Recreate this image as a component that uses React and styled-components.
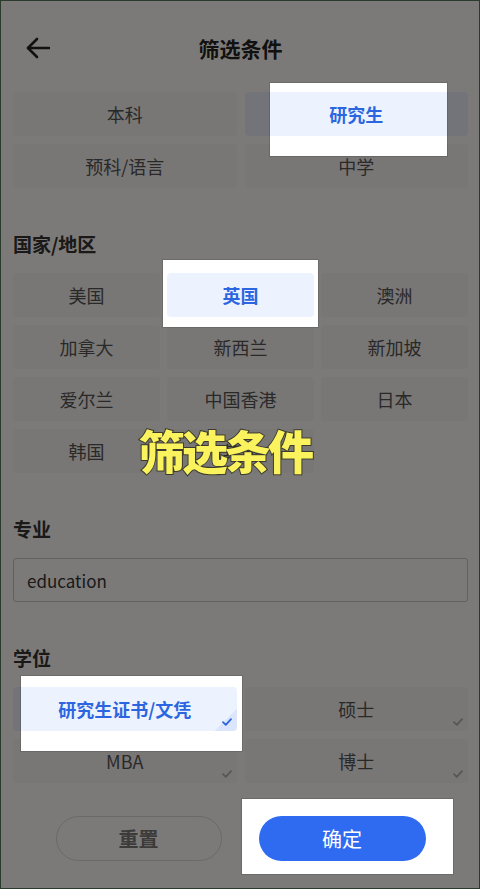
import React from 'react';
import styled, { createGlobalStyle } from 'styled-components';

const GlobalStyle = createGlobalStyle`
    html, body {
        margin: 0;
        padding: 0;
        background: #fff;
    }
    body {
        font-family: "Noto Sans CJK SC", "Noto Sans", sans-serif;
        color: #333;
    }
    * {
        box-sizing: border-box;
    }
`

const Page = styled.div`
    position: relative;
    width: 480px;
    min-height: 889px;
    padding: 0 12px 0 13px;
    background: #fff;
`

const Header = styled.header`
    display: grid;
    grid-template-columns: 48px 1fr 48px;
    align-items: center;
    height: 40px;
    margin-top: 28px;
    margin-bottom: 24px;
`

const BackButton = styled.div`
    display: flex;
    align-items: center;
    padding-left: 13px;
    color: #222;
`

const Title = styled.h1`
    margin: 0;
    text-align: center;
    font-size: 21px;
    font-weight: 700;
    color: #222;
`

const SectionTitle = styled.h3`
    margin: 43px 0 16px;
    font-size: 19px;
    line-height: 26px;
    font-weight: 600;
    color: #333;
`

const OptionGrid = styled.div`
    display: grid;
    grid-template-columns: repeat(${props => props.$cols || 2}, 1fr);
    column-gap: ${props => (props.$cols === 3 ? 7 : 8)}px;
    row-gap: 8px;
`

const Cell = styled.div`
    position: relative;
    height: 44px;
`

const Tile = styled.div`
    position: relative;
    height: 100%;
    display: flex;
    align-items: center;
    justify-content: center;
    border-radius: 4px;
    overflow: hidden;
    font-size: 18px;
    background: ${props => (props.$on ? '#edf3fe' : '#f8f8f9')};
    color: ${props => (props.$on ? '#2b66e0' : '#555')};
    font-weight: ${props => (props.$on ? 600 : 400)};
`

const Corner = styled.span`
    position: absolute;
    right: 0;
    bottom: 0;
    width: 24px;
    height: 22px;
    display: flex;
    align-items: flex-end;
    justify-content: flex-end;
    padding: 0 5px 5px 0;
    background: ${props => (props.$on ? 'linear-gradient(135deg, transparent 50%, #dbe5fb 50%)' : 'transparent')};
    color: ${props => (props.$on ? '#2b66e0' : '#b4b4b4')};
`

const TextField = styled.input`
    display: block;
    width: 100%;
    height: 44px;
    padding: 0 13px;
    border: 1px solid #cacaca;
    border-radius: 3px;
    font-family: inherit;
    font-size: 17px;
    color: #333;
    background: #fff;
    outline: none;
`

const Actions = styled.div`
    display: flex;
    justify-content: center;
    gap: 37px;
    margin-top: 33px;
`

const ActionSlot = styled.div`
    position: relative;
`

const PillButton = styled.button`
    width: ${props => props.$w || 166}px;
    height: 45px;
    border-radius: 23px;
    font-family: inherit;
    font-size: 20px;
    border: ${props => (props.$primary ? 'none' : '1px solid #dcdcdc')};
    background: ${props => (props.$primary ? '#2f6bf0' : '#fff')};
    color: ${props => (props.$primary ? '#fff' : '#7a7a7a')};
    font-weight: ${props => (props.$primary ? 400 : 600)};
`

// guide layer: dims the page, spotlights sit above it
const Dimmer = styled.div`
    position: fixed;
    inset: 0;
    z-index: 10;
    pointer-events: none;
    background: rgba(4, 2, 0, 0.525);
    border: 1px solid #2a3b2d;
`

const Spot = styled.div`
    position: absolute;
    z-index: 20;
    top: ${props => props.$t}px;
    right: ${props => props.$r}px;
    bottom: ${props => props.$b}px;
    left: ${props => props.$l}px;
    background: #fff;
    overflow: hidden;
    box-shadow: 0 0 0 1px rgba(0, 0, 0, 0.12);
`

const Lit = styled.div`
    position: absolute;
    top: ${props => -props.$t}px;
    right: ${props => -props.$r}px;
    bottom: ${props => -props.$b}px;
    left: ${props => -props.$l}px;
`

const Caption = styled.div`
    position: absolute;
    z-index: 30;
    left: 139px;
    top: 398px;
    font-size: 46px;
    line-height: 46px;
    letter-spacing: -3px;
    font-weight: 900;
    color: #fbf35e;
    -webkit-text-stroke: 2px #3b3a2c;
    paint-order: stroke fill;
    white-space: nowrap;
`

function ArrowLeft() {
    return (
        <svg width="24" height="22" viewBox="0 0 24 22" fill="none" stroke="currentColor" strokeWidth="2.6" strokeLinecap="round" strokeLinejoin="round">
            <path d="M23 11H2" />
            <path d="M11 2L2 11l9 9" />
        </svg>
    );
}

function Check() {
    return (
        <svg width="10" height="8" viewBox="0 0 10 8" fill="none" stroke="currentColor" strokeWidth="1.8" strokeLinecap="round" strokeLinejoin="round">
            <path d="M1 4.2l2.8 2.6L9 1.2" />
        </svg>
    );
}

function Highlight({ spot, children }) {
    const [t, r, b, l] = spot;
    return (
        <Spot $t={t} $r={r} $b={b} $l={l}>
            <Lit $t={t} $r={r} $b={b} $l={l}>{children}</Lit>
        </Spot>
    );
}

function Option({ label, on, check, spot }) {
    const tile = (
        <Tile $on={on}>
            {label}
            {check && <Corner $on={on}><Check /></Corner>}
        </Tile>
    );
    return (
        <Cell>
            {tile}
            {spot && <Highlight spot={spot}>{tile}</Highlight>}
        </Cell>
    );
}

const levels = [
    { label: '本科' },
    { label: '研究生', on: true, spot: [-9, 21, -20, 25] },
    { label: '预科/语言' },
    { label: '中学' },
];

const regions = [
    { label: '美国' },
    { label: '英国', on: true, spot: [-13, -4, -10, -4] },
    { label: '澳洲' },
    { label: '加拿大' },
    { label: '新西兰' },
    { label: '新加坡' },
    { label: '爱尔兰' },
    { label: '中国香港' },
    { label: '日本' },
    { label: '韩国' },
    { label: '其他' },
];

const degrees = [
    { label: '研究生证书/文凭', on: true, spot: [-11, -5, -20, 8] },
    { label: '硕士' },
    { label: 'MBA' },
    { label: '博士' },
];

export default function App() {
    return (
        <Page>
            <GlobalStyle />
            <Header>
                <BackButton><ArrowLeft /></BackButton>
                <Title>筛选条件</Title>
                <span />
            </Header>

            <OptionGrid $cols={2}>
                {levels.map(item => <Option key={item.label} {...item} />)}
            </OptionGrid>

            <SectionTitle>国家/地区</SectionTitle>
            <OptionGrid $cols={3}>
                {regions.map(item => <Option key={item.label} {...item} />)}
            </OptionGrid>

            <SectionTitle>专业</SectionTitle>
            <TextField defaultValue="education" readOnly />

            <SectionTitle>学位</SectionTitle>
            <OptionGrid $cols={2}>
                {degrees.map(item => <Option key={item.label} check {...item} />)}
            </OptionGrid>

            <Actions>
                <ActionSlot>
                    <PillButton>重置</PillButton>
                </ActionSlot>
                <ActionSlot>
                    <PillButton $primary $w={167}>确定</PillButton>
                    <Highlight spot={[-17, -27, -13, -17]}>
                        <PillButton $primary $w={167}>确定</PillButton>
                    </Highlight>
                </ActionSlot>
            </Actions>

            <Dimmer />
            <Caption>筛选条件</Caption>
        </Page>
    );
}
